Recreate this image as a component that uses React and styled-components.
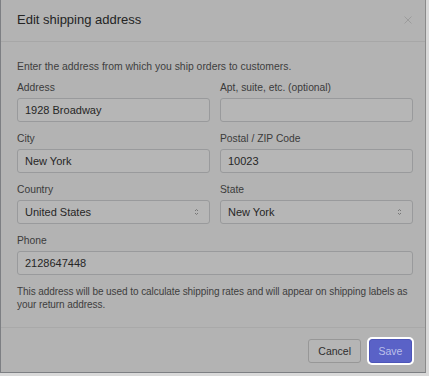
import React from "react";
import styled, { createGlobalStyle } from "styled-components";

const GlobalStyle = createGlobalStyle`
  html, body {
    margin: 0;
    padding: 0;
    background: #d9d9d9;
  }
  body {
    font-family: "Liberation Sans", Arial, sans-serif;
    -webkit-font-smoothing: antialiased;
  }
`;

const Modal = styled.div`
  width: 426px;
  box-sizing: border-box;
  background: #b3b3b3;
  border: 1px solid #7d7f83;
  border-top: none;
  border-right-color: #8a8a8a;
`;

const Header = styled.div`
  height: 42px;
  display: flex;
  align-items: center;
  justify-content: space-between;
  padding: 0 11px 2px 16px;
  box-sizing: border-box;
  border-bottom: 1px solid #a7a7a7;
`;

const Title = styled.h2`
  margin: 0;
  font-size: 13px;
  font-weight: 400;
  color: #242424;
`;

const Close = styled.button`
  border: none;
  background: transparent;
  padding: 0;
  width: 12px;
  height: 12px;
  display: flex;
  align-items: center;
  justify-content: center;
`;

const Body = styled.div`
  padding: 18px 12px 16px 16px;
  border-bottom: 1px solid #a9a9a9;
`;

const Text = styled.p`
  margin: 0;
  font-size: 10.4px;
  line-height: 13px;
  color: #3e3e3e;
  ${(p) => p.$intro && `margin-bottom: 8px;`}
  ${(p) => p.$help && `margin-top: 10px; font-size: 10px; letter-spacing: -0.07px;`}
`;

const Grid = styled.div`
  display: grid;
  grid-template-columns: 1fr 1fr;
  column-gap: 10px;
  row-gap: 10px;
`;

const Field = styled.div`
  display: flex;
  flex-direction: column;
  gap: 3px;
  ${(p) => p.$wide && `grid-column: 1 / span 2;`}
`;

const Label = styled.label`
  font-size: 10.3px;
  line-height: 14px;
  color: #3b3b3b;
`;

const Input = styled.div`
  height: 24px;
  box-sizing: border-box;
  border: 1px solid #999a9c;
  border-radius: 3px;
  background: #b6b6b6;
  display: flex;
  align-items: center;
  justify-content: space-between;
  padding: 0 10px 0 7px;
  font-size: 11px;
  color: #262626;
`;

const Footer = styled.div`
  display: flex;
  justify-content: flex-end;
  gap: 8px;
  padding: 11px 13px 9px 0;
`;

const Button = styled.button`
  height: 24px;
  box-sizing: border-box;
  border-radius: 3px;
  font-family: inherit;
  font-size: 10.5px;
  padding: 0 9px;
  border: 1px solid #979797;
  background: #b5b5b5;
  color: #2e2e2e;
  ${(p) =>
    p.$primary &&
    `background: #5a62c7;
    border-color: #4d55b8;
    color: #bcc0ea;
    width: 43px;
    padding: 0;
    box-shadow: 0 0 0 2px #ffffff;
    `}
`;

function Arrows() {
  return (
    <svg width="5" height="8" viewBox="0 0 5 8">
      <path d="M1 3 L2.5 1.5 L4 3" fill="none" stroke="#6f6f6f" strokeWidth="0.9" />
      <path d="M1 5 L2.5 6.5 L4 5" fill="none" stroke="#6f6f6f" strokeWidth="0.9" />
    </svg>
  );
}

export default function App() {
  return (
    <>
      <GlobalStyle />
      <Modal>
        <Header>
          <Title>Edit shipping address</Title>
          <Close aria-label="Close">
            <svg width="8" height="8" viewBox="0 0 8 8">
              <path d="M0.5 0.5 L7.5 7.5 M7.5 0.5 L0.5 7.5" stroke="#9c9c9c" strokeWidth="1" />
            </svg>
          </Close>
        </Header>
        <Body>
          <Text $intro>Enter the address from which you ship orders to customers.</Text>
          <Grid>
            <Field>
              <Label>Address</Label>
              <Input>1928 Broadway</Input>
            </Field>
            <Field>
              <Label>Apt, suite, etc. (optional)</Label>
              <Input />
            </Field>
            <Field>
              <Label>City</Label>
              <Input>New York</Input>
            </Field>
            <Field>
              <Label>Postal / ZIP Code</Label>
              <Input>10023</Input>
            </Field>
            <Field>
              <Label>Country</Label>
              <Input>
                United States
                <Arrows />
              </Input>
            </Field>
            <Field>
              <Label>State</Label>
              <Input>
                New York
                <Arrows />
              </Input>
            </Field>
            <Field $wide>
              <Label>Phone</Label>
              <Input>2128647448</Input>
            </Field>
          </Grid>
          <Text $help>
            This address will be used to calculate shipping rates and will appear on shipping labels as
            your return address.
          </Text>
        </Body>
        <Footer>
          <Button>Cancel</Button>
          <Button $primary>Save</Button>
        </Footer>
      </Modal>
    </>
  );
}
